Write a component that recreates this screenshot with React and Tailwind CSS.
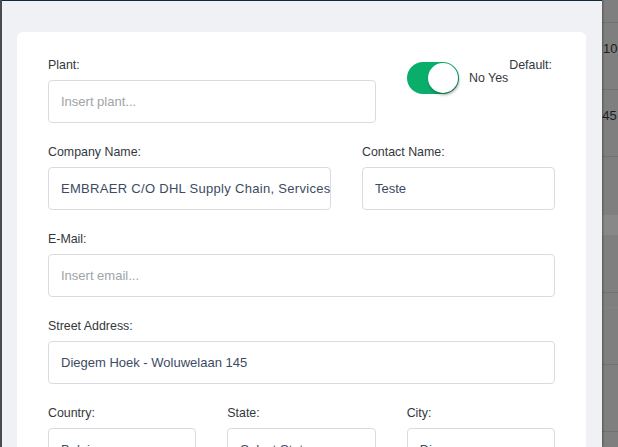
import React from "react";

const font = { fontFamily: "'Liberation Sans', Arial, sans-serif" };

function Label({ children }) {
  return (
    <div className="text-[12.4px] leading-[18px] text-[#34383c] mb-[6px]">{children}</div>
  );
}

function Input({ value, placeholder, wide }) {
  return (
    <div className="h-[43px] border border-[#d8dbe0] rounded-[4px] bg-white flex items-center pl-[12px] overflow-hidden whitespace-nowrap">
      {value ? (
        <span className={wide ? "text-[13px] tracking-[0.3px] text-[#3c4b64]" : "text-[13px] text-[#3c4b64]"}>{value}</span>
      ) : (
        <span className="text-[13px] text-[#9ea3a8]">{placeholder}</span>
      )}
    </div>
  );
}

function Select({ value }) {
  return (
    <div className="relative h-[43px] border border-[#d8dbe0] rounded-[4px] bg-white flex items-center pl-[12px] pr-[20px] overflow-hidden whitespace-nowrap">
      <span className="text-[13px] text-[#3c4b64]">{value}</span>
      <span className="absolute right-[9px] top-[19px] w-0 h-0 border-l-[3.5px] border-r-[3.5px] border-t-[4px] border-l-transparent border-r-transparent border-t-[#555]" />
    </div>
  );
}

export default function App() {
  return (
    <div className="w-[618px] h-[447px] overflow-hidden flex" style={font}>
      <div className="w-[2px] h-full bg-[#4c4c4c] shrink-0" />
      <div className="w-[600px] h-full shrink-0 bg-[#f0f1f5] border-t border-[#0d2b3a] pt-[31px] pl-[15px] pr-[16px] relative z-10 shadow-[1px_0_2px_rgba(0,0,0,0.35)]">
        <div className="bg-white rounded-[6px] pt-[24px] px-[31px] h-[500px]">
          {/* Row 1 */}
          <div className="flex gap-[31px] mb-[20px]">
            <div className="w-[328px]">
              <Label>Plant:</Label>
              <Input placeholder="Insert plant..." />
            </div>
            <div className="w-[148px] flex items-start">
              <div className="relative mt-[6px] w-[52px] h-[32px] rounded-full bg-[#0aae6b] shrink-0">
                <div className="absolute right-[1px] top-[1px] w-[30px] h-[30px] rounded-full bg-white shadow-[1px_2px_3px_rgba(0,0,0,0.35)]" />
              </div>
              <span className="ml-[10px] mt-[13px] text-[12.4px] leading-[18px] text-[#34383c] whitespace-nowrap">No Yes</span>
              <span className="ml-[1px] text-[12.4px] leading-[18px] text-[#34383c] whitespace-nowrap">Default:</span>
            </div>
          </div>
          {/* Row 2 */}
          <div className="flex gap-[31px] mb-[20px]">
            <div className="w-[283px]">
              <Label>Company Name:</Label>
              <Input value="EMBRAER C/O DHL Supply Chain, Services" wide />
            </div>
            <div className="w-[193px]">
              <Label>Contact Name:</Label>
              <Input value="Teste" />
            </div>
          </div>
          {/* Row 3 */}
          <div className="mb-[20px]">
            <Label>E-Mail:</Label>
            <Input placeholder="Insert email..." />
          </div>
          {/* Row 4 */}
          <div className="mb-[20px]">
            <Label>Street Address:</Label>
            <Input value="Diegem Hoek - Woluwelaan 145" />
          </div>
          {/* Row 5 */}
          <div className="grid grid-cols-3 gap-[31px]">
            <div>
              <Label>Country:</Label>
              <Select value="Belgium" />
            </div>
            <div>
              <Label>State:</Label>
              <Select value="Select State..." />
            </div>
            <div>
              <Label>City:</Label>
              <Input value="Diegem" />
            </div>
          </div>
        </div>
      </div>
      <div className="flex-1 h-full bg-[#7f7f7f] flex flex-col overflow-hidden text-[13px] text-[#1e1e1e] whitespace-nowrap">
        <div className="h-[23px] border-b border-[#727272] shrink-0" />
        <div className="h-[67px] border-b border-[#727272] pt-[16px] shrink-0 pl-[1px]">100</div>
        <div className="h-[67px] border-b border-[#727272] pt-[16px] shrink-0 -ml-[7px]">145</div>
        <div className="h-[58px] shrink-0" />
        <div className="h-[20px] bg-[#888888] shrink-0" />
        <div className="h-[58px] border-b border-[#727272] shrink-0" />
        <div className="h-[15px] border-b border-[#838383] shrink-0" />
        <div className="h-[57px] border-b border-[#727272] shrink-0" />
        <div className="h-[67px] border-b border-[#727272] shrink-0" />
        <div className="flex-1" />
      </div>
    </div>
  );
}
